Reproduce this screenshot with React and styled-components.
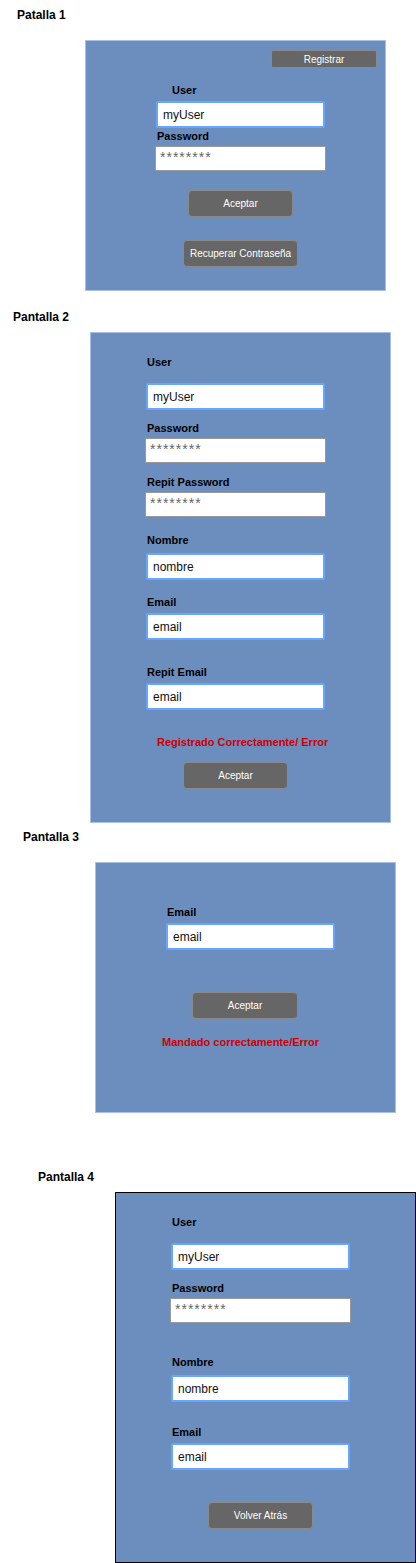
import React from 'react'
import styled, { createGlobalStyle } from 'styled-components'

const GlobalStyle = createGlobalStyle`
  html, body {
    margin: 0;
    padding: 0;
    background: #ffffff;
  }
  body {
    font-family: "Liberation Sans", Arial, Helvetica, sans-serif;
    color: #000;
  }
`

const Page = styled.div`
  width: 416px;
  height: 1563px;
  overflow: hidden;
  display: flex;
  flex-direction: column;
`

const Title = styled.h3`
  margin: ${p => p.$top}px 0 ${p => p.$bottom}px ${p => p.$left}px;
  font-size: 12px;
  line-height: 14px;
  font-weight: bold;
`

const Panel = styled.div`
  box-sizing: border-box;
  width: 301px;
  height: ${p => p.$h}px;
  margin-left: ${p => p.$left}px;
  background: #6c8ebf;
  border: 1px solid ${p => (p.$dark ? '#000000' : '#a9c1e4')};
  display: flex;
  flex-direction: column;
  align-items: flex-start;
`

const Label = styled.div`
  margin: ${p => p.$y}px 0 0 ${p => p.$x}px;
  font-size: 11px;
  line-height: 14px;
  font-weight: bold;
  color: ${p => (p.$error ? '#cc0000' : '#000000')};
  white-space: nowrap;
`

const TextBox = styled.div`
  box-sizing: border-box;
  margin: ${p => p.$y}px 0 0 ${p => p.$x}px;
  width: ${p => p.$w}px;
  height: 27px;
  background: #ffffff;
  border: 2px solid #66a6ff;
  border-radius: 2px;
  padding: 0 5px;
  display: flex;
  align-items: center;
  font-size: 12px;
  color: #111;
`

const SecretBox = styled.div`
  box-sizing: border-box;
  margin: ${p => p.$y}px 0 0 ${p => p.$x}px;
  width: ${p => p.$w}px;
  height: 25px;
  background: #ffffff;
  border: 1px solid #999999;
  padding: 3px 4px 0;
  font-size: 14px;
  line-height: 14px;
  letter-spacing: 1px;
  color: #666666;
`

const Button = styled.div`
  box-sizing: border-box;
  margin: ${p => p.$y}px 0 0 ${p => p.$x}px;
  width: ${p => p.$w}px;
  height: ${p => p.$h || 27}px;
  background: #666666;
  border: 1px solid #8a8a8a;
  border-radius: ${p => (p.$small ? 2 : 4)}px;
  color: #ffffff;
  font-size: 10px;
  display: flex;
  align-items: center;
  justify-content: center;
  white-space: nowrap;
`

const Field = ({ label, value, secret, lx, ly, bx, by, w }) => (
  <>
    <Label $x={lx} $y={ly}>{label}</Label>
    {secret ? (
      <SecretBox $x={bx} $y={by} $w={w}>********</SecretBox>
    ) : (
      <TextBox $x={bx} $y={by} $w={w}>{value}</TextBox>
    )}
  </>
)

export default function App() {
  return (
    <Page>
      <GlobalStyle />

      <Title $top={8} $bottom={18} $left={17}>Patalla 1</Title>
      <Panel $h={251} $left={85}>
        <Button $x={185} $y={9} $w={106} $h={18} $small>Registrar</Button>
        <Field label="User" value="myUser" lx={86} ly={15} bx={70} by={4} w={169} />
        <Field label="Password" secret lx={71} ly={1} bx={69} by={3} w={171} />
        <Button $x={102} $y={19} $w={105}>Aceptar</Button>
        <Button $x={97} $y={23} $w={115}>Recuperar Contraseña</Button>
      </Panel>

      <Title $top={19} $bottom={8} $left={13}>Pantalla 2</Title>
      <Panel $h={491} $left={90}>
        <Field label="User" value="myUser" lx={56} ly={22} bx={55} by={14} w={179} />
        <Field label="Password" secret lx={56} ly={11} bx={54} by={3} w={181} />
        <Field label="Repit Password" secret lx={56} ly={12} bx={54} by={3} w={181} />
        <Field label="Nombre" value="nombre" lx={56} ly={16} bx={55} by={6} w={179} />
        <Field label="Email" value="email" lx={56} ly={15} bx={55} by={4} w={179} />
        <Field label="Repit Email" value="email" lx={56} ly={25} bx={55} by={4} w={179} />
        <Label $x={66} $y={25} $error>Registrado Correctamente/ Error</Label>
        <Button $x={92} $y={13} $w={105}>Aceptar</Button>
      </Panel>

      <Title $top={7} $bottom={18} $left={23}>Pantalla 3</Title>
      <Panel $h={251} $left={95}>
        <Field label="Email" value="email" lx={71} ly={42} bx={70} by={4} w={169} />
        <Button $x={96} $y={42} $w={106}>Aceptar</Button>
        <Label $x={66} $y={16} $error>Mandado correctamente/Error</Label>
      </Panel>

      <Title $top={57} $bottom={8} $left={38}>Pantalla 4</Title>
      <Panel $h={371} $left={115} $dark>
        <Field label="User" value="myUser" lx={56} ly={22} bx={55} by={14} w={179} />
        <Field label="Password" secret lx={56} ly={11} bx={54} by={3} w={181} />
        <Field label="Nombre" value="nombre" lx={56} ly={32} bx={55} by={6} w={179} />
        <Field label="Email" value="email" lx={56} ly={23} bx={55} by={4} w={179} />
        <Button $x={92} $y={32} $w={105}>Volver Atrás</Button>
      </Panel>
    </Page>
  )
}
